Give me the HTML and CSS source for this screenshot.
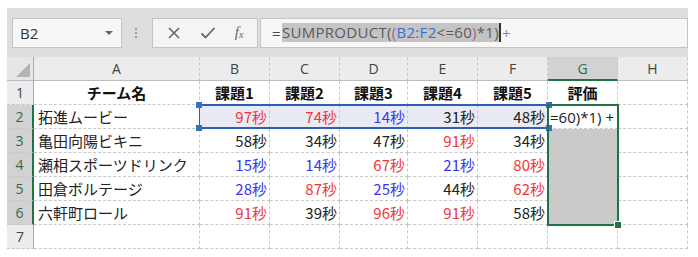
FILE: index.html
```html
<!DOCTYPE html>
<html lang="ja">
<head>
    <meta charset="UTF-8">
    <title>チーム評価</title>
    <link rel="stylesheet" href="styles.css">
</head>
<body>
    <div class="window">
        <div class="toolbar">
            <div class="namebox">
                <span>B2</span>
                <span class="caret"></span>
            </div>
            <div class="grip"></div>
            <div class="fxbox">
                <svg width="14" height="14" viewBox="0 0 14 14"><path d="M2 2 L12 12 M12 2 L2 12" stroke="#666" stroke-width="1.6" fill="none"/></svg>
                <svg width="16" height="14" viewBox="0 0 16 14"><path d="M1.5 7.5 L5.5 11.5 L14.5 2" stroke="#666" stroke-width="1.8" fill="none"/></svg>
                <span class="fx">f<sub>x</sub></span>
            </div>
            <div class="formula">
                <span class="eq">=</span><span class="hl">SUMPRODUCT(<span class="paren">(</span><span class="ref">B2:F2</span>&lt;=60<span class="paren">)</span>*1)</span><span class="cursor"></span><span class="plus">+</span>
            </div>
        </div>

        <div class="sheet">
            <div class="corner"><span class="tri"></span></div>
            <div class="colhead">A</div>
            <div class="colhead">B</div>
            <div class="colhead">C</div>
            <div class="colhead">D</div>
            <div class="colhead">E</div>
            <div class="colhead">F</div>
            <div class="colhead active">G</div>
            <div class="colhead">H</div>

            <div class="rowhead">1</div>
            <div class="cell head">チーム名</div>
            <div class="cell head">課題1</div>
            <div class="cell head">課題2</div>
            <div class="cell head">課題3</div>
            <div class="cell head">課題4</div>
            <div class="cell head">課題5</div>
            <div class="cell head">評価</div>
            <div class="cell"></div>

            <div class="rowhead active">2</div>
            <div class="cell name">拓進ムービー</div>
            <div class="cell num red sel">97秒</div>
            <div class="cell num red sel">74秒</div>
            <div class="cell num blue sel">14秒</div>
            <div class="cell num sel">31秒</div>
            <div class="cell num sel">48秒</div>
            <div class="cell edit">=60)*1)<span class="plus2">+</span></div>
            <div class="cell"></div>

            <div class="rowhead active">3</div>
            <div class="cell name">亀田向陽ビキニ</div>
            <div class="cell num">58秒</div>
            <div class="cell num">34秒</div>
            <div class="cell num">47秒</div>
            <div class="cell num red">91秒</div>
            <div class="cell num">34秒</div>
            <div class="cell grey"></div>
            <div class="cell"></div>

            <div class="rowhead active">4</div>
            <div class="cell name">瀬相スポーツドリンク</div>
            <div class="cell num blue">15秒</div>
            <div class="cell num blue">14秒</div>
            <div class="cell num red">67秒</div>
            <div class="cell num blue">21秒</div>
            <div class="cell num red">80秒</div>
            <div class="cell grey"></div>
            <div class="cell"></div>

            <div class="rowhead active">5</div>
            <div class="cell name">田倉ボルテージ</div>
            <div class="cell num blue">28秒</div>
            <div class="cell num red">87秒</div>
            <div class="cell num blue">25秒</div>
            <div class="cell num">44秒</div>
            <div class="cell num red">62秒</div>
            <div class="cell grey"></div>
            <div class="cell"></div>

            <div class="rowhead active">6</div>
            <div class="cell name">六軒町ロール</div>
            <div class="cell num red">91秒</div>
            <div class="cell num">39秒</div>
            <div class="cell num red">96秒</div>
            <div class="cell num red">91秒</div>
            <div class="cell num">58秒</div>
            <div class="cell grey"></div>
            <div class="cell"></div>

            <div class="rowhead">7</div>
            <div class="cell"></div>
            <div class="cell"></div>
            <div class="cell"></div>
            <div class="cell"></div>
            <div class="cell"></div>
            <div class="cell"></div>
            <div class="cell"></div>
            <div class="cell"></div>

            <!-- выделения поверх сетки -->
            <div class="range-blue">
                <span class="knob tl"></span>
                <span class="knob bl"></span>
                <span class="knob tr"></span>
                <span class="knob br"></span>
            </div>
            <div class="range-green"><span class="fill-handle"></span></div>
        </div>
    </div>
</body>
</html>
```

FILE: styles.css
```css
body {
    margin: 0;
    background-color: #fff;
    font-family: "Noto Sans CJK JP", "Noto Sans", sans-serif;
    color: #222;
}
.window {
    margin: 8px 0 0 7px;
    width: 681px;
}
.toolbar {
    height: 49px;
    background-color: #dedede;
    display: flex;
    align-items: center;
    padding-left: 5px;
    box-sizing: border-box;
}
.namebox {
    width: 110px;
    height: 30px;
    box-sizing: border-box;
    background-color: #f7f7f7;
    border: 1px solid #c4c4c4;
    display: flex;
    align-items: center;
    justify-content: space-between;
    padding: 0 8px 0 7px;
    font-family: "Open Sans", sans-serif;
    font-size: 15px;
    color: #333;
}
.caret {
    width: 0;
    height: 0;
    border-left: 4px solid transparent;
    border-right: 4px solid transparent;
    border-top: 4px solid #666;
}
.grip {
    width: 2px;
    height: 10px;
    margin: 0 13px 0 13px;
    border-left: 2px dotted #999;
}
.fxbox {
    width: 106px;
    height: 30px;
    box-sizing: border-box;
    background-color: #f4f4f4;
    border: 1px solid #c4c4c4;
    display: flex;
    align-items: center;
    justify-content: space-around;
    padding: 0 4px;
}
.fx {
    font-family: "Liberation Serif", serif;
    font-style: italic;
    font-size: 15px;
    color: #666;
}
.fx sub {
    font-size: 10px;
    vertical-align: -1px;
}
.formula {
    flex: 1;
    margin-left: 2px;
    height: 30px;
    box-sizing: border-box;
    background-color: #f7f7f7;
    border: 1px solid #c4c4c4;
    display: flex;
    align-items: center;
    padding-left: 11px;
    font-family: "Open Sans", sans-serif;
    font-size: 15px;
    letter-spacing: 0.3px;
    color: #444;
    white-space: nowrap;
}
.eq {
    margin-right: 1px;
}
.hl {
    background-color: #c4c4c4;
    color: #5a5a5a;
    line-height: 19px;
}
.paren {
    color: #b15a9c;
}
.ref {
    color: #3a6fd0;
}
.cursor {
    width: 2px;
    height: 19px;
    background-color: #333;
}
.plus {
    color: #888;
    margin-left: 1px;
}
.sheet {
    position: relative;
    display: grid;
    grid-template-columns: 27px 166px 70px 70px 68px 70px 70px 70px 70px;
    grid-auto-rows: 24px;
}
.corner {
    background-color: #e6e6e6;
    border-right: 1px solid #aaa;
    border-bottom: 1px solid #bbb;
    position: relative;
}
.tri {
    position: absolute;
    right: 3px;
    bottom: 3px;
    width: 0;
    height: 0;
    border-left: 14px solid transparent;
    border-bottom: 14px solid #b4b4b4;
}
.colhead {
    background-color: #ececec;
    border-right: 1px dashed #c8c8c8;
    border-bottom: 1px solid #bdbdbd;
    display: flex;
    align-items: center;
    justify-content: center;
    font-family: "Open Sans", sans-serif;
    font-size: 14px;
    color: #444;
}
.colhead.active {
    background-color: #d2d2d2;
    color: #217346;
    border-bottom: 2px solid #217346;
}
.rowhead {
    background-color: #ececec;
    border-right: 1px solid #aaa;
    border-bottom: 1px dashed #c8c8c8;
    display: flex;
    align-items: center;
    justify-content: center;
    font-family: "Open Sans", sans-serif;
    font-size: 14px;
    color: #444;
}
.rowhead.active {
    background-color: #d2d2d2;
    color: #2f6a4c;
    border-right: 2px solid #217346;
}
.cell {
    border-right: 1px dashed #c8c8c8;
    border-bottom: 1px dashed #c8c8c8;
    display: flex;
    align-items: center;
    font-size: 15px;
    white-space: nowrap;
    overflow: hidden;
    box-sizing: border-box;
}
.head {
    justify-content: center;
    font-weight: bold;
    color: #111;
}
.name {
    padding-left: 4px;
}
.num {
    justify-content: flex-end;
    padding-right: 2px;
}
.sel {
    background-color: #e9ebf4;
}
.red {
    color: #f2353b;
}
.blue {
    color: #3737f2;
}
.grey {
    background-color: #cacaca;
}
.edit {
    padding-left: 2px;
    font-family: "Open Sans", sans-serif;
    font-size: 15px;
    color: #222;
}
.plus2 {
    margin-left: 4px;
}
.range-blue {
    position: absolute;
    left: 192px;
    top: 47px;
    width: 349px;
    height: 25px;
    border-top: 2px solid #2d5fb8;
    border-bottom: 2px solid #2d5fb8;
    border-left: 1px solid #2d5fb8;
    box-sizing: border-box;
}
.knob {
    position: absolute;
    width: 6px;
    height: 6px;
    background-color: #3a6fc6;
}
.tl { left: -4px; top: -4px; }
.bl { left: -4px; bottom: -4px; }
.tr { right: -4px; top: -4px; }
.br { right: -4px; bottom: -4px; }
.range-green {
    position: absolute;
    left: 540px;
    top: 47px;
    width: 72px;
    height: 122px;
    border: 2px solid #217346;
    box-sizing: border-box;
}
.fill-handle {
    position: absolute;
    right: -5px;
    bottom: -5px;
    width: 6px;
    height: 6px;
    background-color: #217346;
    border: 1px solid #fff;
}
```
